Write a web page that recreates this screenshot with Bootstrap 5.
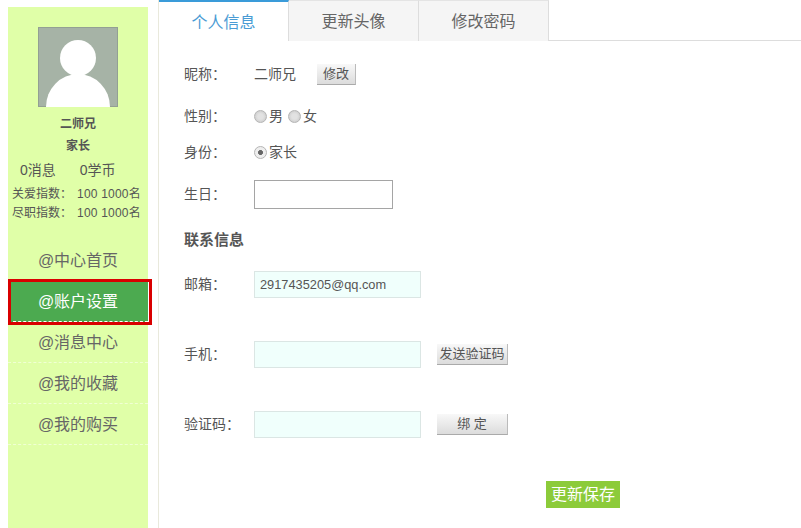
<!DOCTYPE html>
<html lang="zh-CN">
<head>
  <meta charset="UTF-8" />
  <meta name="viewport" content="width=device-width, initial-scale=1.0" />
  <title>账户设置</title>
  <link href="https://cdn.jsdelivr.net/npm/bootstrap@5.3.3/dist/css/bootstrap.min.css" rel="stylesheet">
  <style>
    html, body { height: 528px; overflow: hidden; }
    body { font-family: "Liberation Sans", "Noto Sans CJK SC", sans-serif; font-size: 14px; color: #555; background: #fff; }
    .shell { height: 528px; padding-left: 8px; }
    .side { width: 140px; height: 521px; margin-top: 7px; background: #e0ffa8; flex: none; }
    .side-photo { display: block; width: 80px; height: 80px; margin: 20px auto 0; }
    .side-name { font-size: 12px; font-weight: bold; text-align: center; line-height: 16px; margin-top: 9px; }
    .side-role { font-size: 12px; font-weight: bold; text-align: center; line-height: 16px; margin-top: 6px; }
    .side-stats { font-size: 14px; line-height: 18px; margin-top: 7px; padding-left: 12px; gap: 24px; }
    .side-index { font-size: 12px; line-height: 18px; margin-top: 6px; padding-left: 4px; white-space: nowrap; gap: 5px; }
    .side-index + .side-index { margin-top: 1px; }
    .side-index span + span { letter-spacing: .2px; }
    .side-menu { margin-top: 18px; }
    .side-link { display: block; height: 41px; line-height: 42px; font-size: 16px; color: #666; text-align: center; text-decoration: none; border-bottom: 1px dashed #f0ffd4; }
    .side-link.on { background: #4caa50; color: #fff; border-bottom-color: #fff; position: relative; }
    .side-link.on::after { content: ""; position: absolute; left: 0; top: -2px; width: 144px; height: 46px; border: 3px solid #d90000; }
    .main { margin-left: 10px; width: 643px; border-left: 1px solid #e9e9dc; }
    .tab-bar { height: 41px; border-bottom: 1px solid #ddd; }
    .tab-item { width: 130px; height: 41px; line-height: 42px; font-size: 16px; text-align: center; color: #666; background: #f5f5f5; border-top: 1px solid #e4e4e4; border-right: 1px solid #ddd; text-decoration: none; }
    .tab-item.on { background: #fff; color: #4a9bd4; border-top: 2px solid #3a9bd9; line-height: 41px; }
    .form-area { padding: 23px 0 0 25px; position: relative; }
    .form-line { display: flex; align-items: center; }
    .form-tag { width: 70px; flex: none; }
    .line-nick { height: 21px; }
    .line-sex { height: 20px; margin-top: 21px; }
    .line-role { height: 20px; margin-top: 16px; }
    .line-birth { margin-top: 18px; }
    .line-mail { margin-top: 21px; }
    .line-far { margin-top: 43px; }
    .group-title { font-size: 15px; font-weight: bold; line-height: 20px; margin-top: 21px; }
    .mini-btn { height: 21px; padding: 0; font-size: 13px; line-height: 20px; color: #555; background: linear-gradient(#f8f8f8, #dcdcdc); border: 0; border-right: 1px solid #bbb; border-bottom: 1px solid #aaa; border-radius: 0; }
    .btn-change { width: 39px; margin-left: 21px; }
    .btn-code { width: 71px; margin-left: 16px; }
    .dot { width: 13px; height: 13px; border-radius: 50%; border: 1px solid #b5b5b5; background: radial-gradient(#e2e2e2 35%, #cfcfcf 75%); flex: none; }
    .dot.on { background: radial-gradient(#666 28%, #eee 34%); }
    .dot-text { margin-left: 2px; margin-right: 5px; }
    .box-plain { width: 139px; height: 29px; border: 1px solid #a5a5a5; background: #fff; }
    .box-tint { width: 167px; height: 27px; border: 1px solid #dbe6e4; background: #f0fffc; padding: 0 5px; font-family: inherit; font-size: 12.8px; color: #555; }
    .save-btn { position: absolute; left: 387px; top: 440px; width: 74px; height: 27px; padding: 0; background: #8ccb3a; color: #fff; border: 0; border-radius: 0; font-size: 16px; line-height: 27px; }
  </style>
</head>
<body>
  <div class="shell d-flex">
    <!-- left column -->
    <div class="side">
      <svg class="side-photo" viewBox="0 0 80 80">
        <rect width="80" height="80" fill="#a6b3a6"/>
        <rect x=".5" y=".5" width="79" height="79" fill="none" stroke="#93a093"/>
        <circle cx="40" cy="31" r="18" fill="#fff"/>
        <path d="M8 80a32 33 0 0 1 64 0z" fill="#fff"/>
      </svg>
      <div class="side-name">二师兄</div>
      <div class="side-role">家长</div>
      <div class="side-stats d-flex"><span>0消息</span><span>0学币</span></div>
      <div class="side-index d-flex"><span>关爱指数：</span><span>100 1000名</span></div>
      <div class="side-index d-flex"><span>尽职指数：</span><span>100 1000名</span></div>
      <div class="side-menu">
        <a class="side-link" href="#">@中心首页</a>
        <a class="side-link on" href="#">@账户设置</a>
        <a class="side-link" href="#">@消息中心</a>
        <a class="side-link" href="#">@我的收藏</a>
        <a class="side-link" href="#">@我的购买</a>
      </div>
    </div>

    <!-- right column -->
    <div class="main">
      <div class="tab-bar d-flex">
        <a class="tab-item on" href="#">个人信息</a>
        <a class="tab-item" href="#">更新头像</a>
        <a class="tab-item" href="#">修改密码</a>
      </div>
      <div class="form-area">
        <div class="form-line line-nick">
          <span class="form-tag">昵称：</span><span>二师兄</span>
          <button class="mini-btn btn-change">修改</button>
        </div>
        <div class="form-line line-sex">
          <span class="form-tag">性别：</span><span class="dot"></span><span class="dot-text">男</span><span class="dot"></span><span class="dot-text">女</span>
        </div>
        <div class="form-line line-role">
          <span class="form-tag">身份：</span><span class="dot on"></span><span class="dot-text">家长</span>
        </div>
        <div class="form-line line-birth">
          <span class="form-tag">生日：</span><input class="box-plain" type="text">
        </div>
        <div class="group-title">联系信息</div>
        <div class="form-line line-mail">
          <span class="form-tag">邮箱：</span><input class="box-tint" type="text" value="2917435205@qq.com">
        </div>
        <div class="form-line line-far">
          <span class="form-tag">手机：</span><input class="box-tint" type="text">
          <button class="mini-btn btn-code">发送验证码</button>
        </div>
        <div class="form-line line-far">
          <span class="form-tag">验证码：</span><input class="box-tint" type="text">
          <button class="mini-btn btn-code">绑 定</button>
        </div>
        <button class="save-btn">更新保存</button>
      </div>
    </div>
  </div>
  <script src="https://cdn.jsdelivr.net/npm/bootstrap@5.3.3/dist/js/bootstrap.bundle.min.js"></script>
</body>
</html>
